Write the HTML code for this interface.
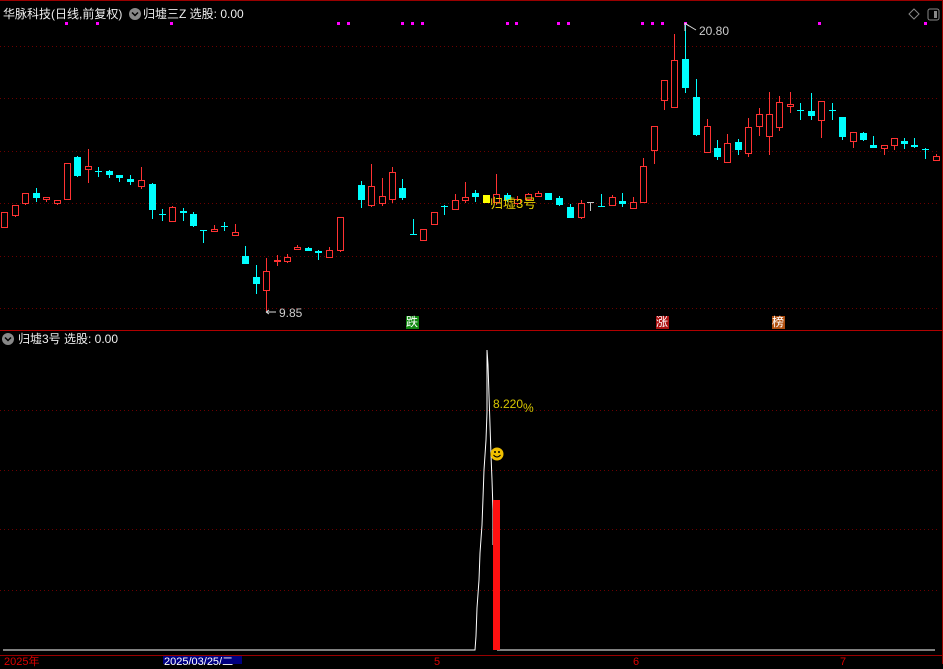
<!DOCTYPE html>
<html><head><meta charset="utf-8"><style>
body{margin:0;background:#000;width:943px;height:664px;overflow:hidden;position:relative;font-family:"Liberation Sans","Noto Sans CJK SC",sans-serif}
.t{position:absolute;font-size:12px;white-space:nowrap;line-height:14px}
</style></head><body>
<svg id="s" width="943" height="664" style="position:absolute;left:0;top:0" xmlns="http://www.w3.org/2000/svg">
<line x1="0" y1="0.5" x2="943" y2="0.5" stroke="#900"/>
<line x1="942.5" y1="0" x2="942.5" y2="664" stroke="#900"/>
<line x1="0" y1="330.5" x2="943" y2="330.5" stroke="#b00000"/>
<line x1="0" y1="655.5" x2="943" y2="655.5" stroke="#900"/>
<g stroke="#6a0000" stroke-dasharray="1,3">
<line x1="0" y1="46.5" x2="940" y2="46.5"/><line x1="0" y1="98.5" x2="940" y2="98.5"/>
<line x1="0" y1="151.5" x2="940" y2="151.5"/><line x1="0" y1="203.5" x2="940" y2="203.5"/>
<line x1="0" y1="256.5" x2="940" y2="256.5"/><line x1="0" y1="308.5" x2="940" y2="308.5"/>
<line x1="0" y1="410.5" x2="940" y2="410.5"/><line x1="0" y1="470.5" x2="940" y2="470.5"/>
<line x1="0" y1="529.5" x2="940" y2="529.5"/><line x1="0" y1="590.5" x2="940" y2="590.5"/>
</g>
<g id="c"></g>
<polyline points="3,650 475,650 476,636 477,608 479,580 480,553 482,525 483,498 484,470 486,440 487,412 487,380 487,350 488,365 489,395 490,425 491,455 492,480 493,510 493,545" fill="none" stroke="#fff" stroke-width="1"/>
<line x1="497" y1="650" x2="935" y2="650" stroke="#fff"/>
<rect x="493" y="500" width="7" height="150" fill="#ff1010"/>
<circle cx="497" cy="454" r="6.5" fill="#f0c000"/>
<circle cx="495" cy="452" r="1" fill="#000"/><circle cx="499" cy="452" r="1" fill="#000"/>
<path d="M493.5 455 Q497 459 500.5 455" stroke="#000" fill="none"/>
<rect x="163" y="656" width="79" height="8" fill="#000080"/>
<circle cx="135" cy="14" r="6" fill="#888"/><path d="M132 12.5l3 3 3-3" stroke="#000" stroke-width="1.5" fill="none"/>
<circle cx="8" cy="339" r="6" fill="#888"/><path d="M5 337.5l3 3 3-3" stroke="#000" stroke-width="1.5" fill="none"/>
<path d="M914 9l5 5-5 5-5-5z" stroke="#888" fill="none"/>
<rect x="928" y="9" width="11" height="11" rx="2" stroke="#888" fill="none"/><rect x="934" y="11" width="3" height="7" fill="#888"/>
<path d="M266 312h10M266 312l3-2M266 312l3 2" stroke="#ddd"/>
<path d="M685 23l0 8M685 23l4 3" stroke="#ddd"/><path d="M686 24l10 6" stroke="#ddd"/>
<rect x="406" y="316" width="13" height="13" fill="#118811"/>
<rect x="656" y="316" width="13" height="13" fill="#aa1111"/>
<rect x="772" y="316" width="13" height="13" fill="#b05010"/>
</svg>
<div class="t" style="left:3px;top:7px;color:#eee;font-size:12px">华脉科技(日线,前复权)</div>
<div class="t" style="left:143px;top:7px;color:#eee;font-size:12px">归墟三Z 选股: 0.00</div>
<div class="t" style="left:18px;top:332px;color:#eee;font-size:12px">归墟3号 选股: 0.00</div>
<div class="t" style="left:279px;top:306px;color:#ccc">9.85</div>
<div class="t" style="left:699px;top:24px;color:#ccc">20.80</div>
<div class="t" style="left:406px;top:315px;color:#fff">跌</div>
<div class="t" style="left:656px;top:315px;color:#fff">涨</div>
<div class="t" style="left:772px;top:315px;color:#fff">榜</div>
<div class="t" style="left:490px;top:197px;color:#e8d000;font-size:13px">归墟3号</div>
<div class="t" style="left:493px;top:397px;color:#d8c800">8.220<span style="position:relative;top:4px">%</span></div>
<div class="t" style="left:4px;top:655px;color:#d00;font-size:11px">2025年</div>
<div class="t" style="left:164px;top:655px;color:#fff;font-size:11px">2025/03/25/二</div>
<div class="t" style="left:434px;top:655px;color:#d00;font-size:11px">5</div>
<div class="t" style="left:633px;top:655px;color:#d00;font-size:11px">6</div>
<div class="t" style="left:840px;top:655px;color:#d00;font-size:11px">7</div>
<script>
var C=[[4,212,227,212,227,'r'],[15,205,215,205,217,'r'],[25,193,203,193,205,'r'],[36,193,198,188,202,'c'],[46,197,199,197,202,'r'],[57,200,203,200,205,'r'],[67,163,199,163,199,'r'],[77,157,176,156,177,'c'],[88,166,169,149,183,'r'],[98,171,172,167,177,'c'],[109,171,175,170,178,'c'],[119,175,178,175,182,'c'],[130,179,182,175,185,'c'],[141,180,186,167,189,'r'],[152,184,210,183,219,'c'],[162,214,215,209,221,'c'],[172,207,221,206,221,'r'],[183,211,213,208,221,'c'],[193,214,226,212,227,'c'],[203,230,231,230,243,'c'],[214,229,231,225,231,'r'],[224,226,227,222,231,'c'],[235,232,235,224,236,'r'],[245,256,264,246,264,'c'],[256,277,284,265,294,'c'],[266,271,290,258,311,'r'],[277,260,261,255,266,'r'],[287,257,261,254,263,'r'],[297,247,249,245,250,'r'],[308,248,251,247,251,'c'],[318,251,253,250,260,'c'],[329,250,257,247,257,'r'],[340,217,250,217,252,'r'],[361,185,200,181,208,'c'],[371,186,205,164,207,'r'],[382,196,203,178,206,'r'],[392,172,199,167,203,'r'],[402,188,198,179,200,'c'],[413,234,235,219,235,'c'],[423,229,240,229,240,'r'],[434,212,224,212,224,'r'],[444,206,207,205,215,'c'],[455,200,209,194,210,'r'],[465,197,200,182,203,'r'],[475,193,197,190,202,'c'],[486,195,203,195,203,'y'],[496,194,202,174,205,'r'],[507,195,200,193,202,'c'],[517,199,203,196,205,'r'],[528,194,199,193,201,'r'],[538,193,196,191,197,'r'],[548,193,200,193,200,'c'],[559,198,205,196,206,'c'],[570,207,218,204,218,'c'],[581,203,217,200,219,'r'],[590,202,203,202,211,'w'],[601,206,207,194,207,'c'],[612,197,205,195,206,'r'],[622,201,204,193,207,'c'],[633,202,208,197,208,'r'],[643,166,202,158,202,'r'],[654,126,150,126,164,'r'],[664,80,100,80,110,'r'],[674,60,107,34,107,'r'],[685,59,88,23,93,'c'],[696,97,135,79,136,'c'],[707,126,152,119,152,'r'],[717,148,157,140,160,'c'],[727,143,162,134,163,'r'],[738,142,150,139,155,'c'],[748,127,153,118,157,'r'],[759,114,126,108,136,'r'],[769,114,136,92,155,'r'],[779,102,127,96,131,'r'],[790,104,106,92,113,'r'],[800,110,111,103,120,'c'],[811,111,116,93,120,'c'],[821,101,120,101,138,'r'],[832,110,111,103,120,'c'],[842,117,137,117,140,'c'],[853,132,141,132,148,'r'],[863,133,140,132,141,'c'],[873,145,148,136,148,'c'],[884,145,148,145,155,'r'],[894,138,145,138,150,'r'],[904,141,144,138,149,'c'],[914,145,147,138,148,'c'],[925,149,150,148,159,'c'],[936,156,160,154,160,'r']];
var M=[66,97,171,338,348,402,412,422,507,516,558,568,642,652,662,685,819,925];
var h='';C.forEach(function(k){var x=k[0],col={r:'#ff3232',c:'#00ffff',y:'#ffff00',w:'#c0c0c0'}[k[5]];
h+='<line x1="'+(x+.5)+'" y1="'+k[3]+'" x2="'+(x+.5)+'" y2="'+k[4]+'" stroke="'+col+'"/>';
var hh=Math.max(1,k[2]-k[1]);
if(k[5]=='r')h+='<rect x="'+(x-2.5)+'" y="'+(k[1]+.5)+'" width="6" height="'+hh+'" fill="#000" stroke="'+col+'"/>';
else h+='<rect x="'+(x-3)+'" y="'+k[1]+'" width="7" height="'+hh+'" fill="'+col+'"/>';});
M.forEach(function(x){h+='<rect x="'+(x-1)+'" y="22" width="3" height="3" fill="#ff00ff"/>';});
document.getElementById('c').innerHTML=h;
</script>
</body></html>
